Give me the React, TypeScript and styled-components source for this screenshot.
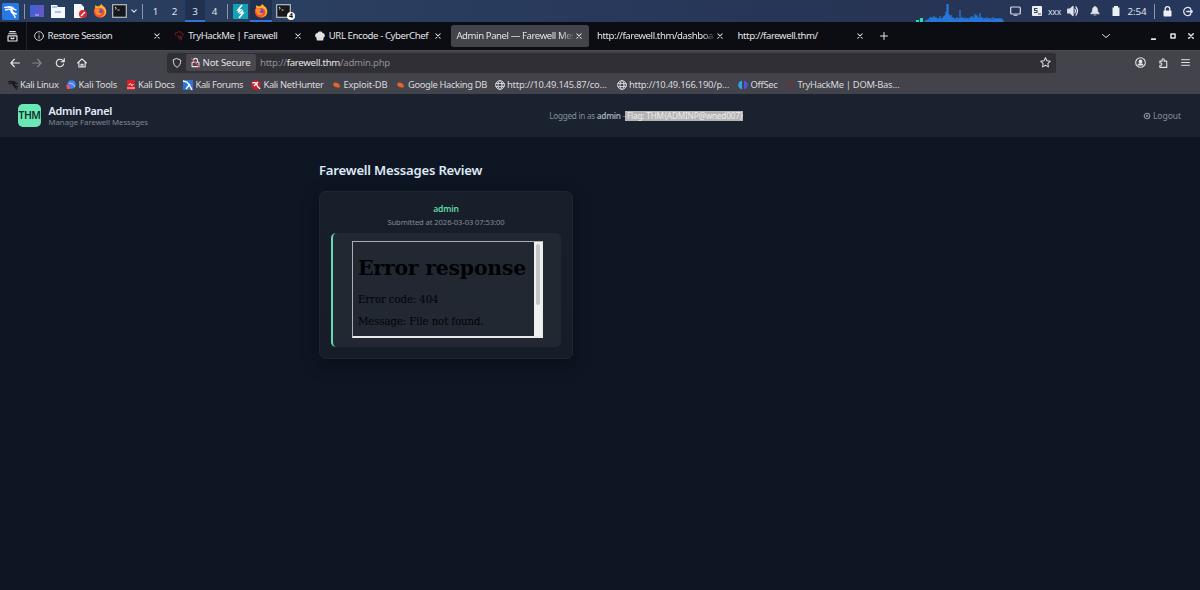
import React from 'react';
import styled, { createGlobalStyle } from 'styled-components';

const Global = createGlobalStyle`
  *{box-sizing:border-box}
  html,body{margin:0;background:#0e1623}
  body{font-family:"Noto Sans",sans-serif;width:1200px;height:590px;overflow:hidden}
  svg{display:block;flex:none;overflow:visible}
`;

const Screen = styled.div`display:flex;flex-direction:column;width:1200px;height:590px;background:#0e1623;`;
const TaskBar = styled.header`
  display:flex;height:22px;flex:none;color:#dfe3ec;
  background:linear-gradient(90deg,#273b5d 0,#2b3f60 25%,#28395b 50%,#273454 75%,#26375c 100%);
`;
const Slot = styled.div<{ $w: number; $on?: boolean; $small?: boolean }>`
  width:${p => p.$w}px;height:22px;flex:none;display:flex;align-items:center;justify-content:center;
  font-size:${p => (p.$small ? 8.5 : 9.8)}px;letter-spacing:-.15px;position:relative;
  background:${p => (p.$on ? '#20304f' : 'transparent')};
  box-shadow:${p => (p.$on ? 'inset 0 -2px #3672dc' : 'none')};
`;
const Rule = styled.i`width:1px;height:15px;background:#8b96aa;`;
const Fill = styled.div`flex:1;`;
const Count = styled.b`
  position:absolute;right:-1px;bottom:2px;width:8px;height:8px;border-radius:50%;background:#fff;color:#111;
  font-size:7px;line-height:8px;text-align:center;
`;
const TabStrip = styled.div`display:flex;height:28px;flex:none;background:#0c0d12;color:#e2e3e6;align-items:center;`;
const ViewCell = styled.div`width:27px;height:28px;border-right:1px solid #24252b;display:flex;align-items:center;justify-content:center;padding-right:2px;`;
const Tabs = styled.div`display:flex;gap:3px;padding-left:2.6px;`;
const TabBox = styled.div<{ $on?: boolean }>`
  width:137.6px;height:22px;border-radius:2.5px;display:flex;align-items:center;padding:0 7px 0 4px;gap:3px;
  background:${p => (p.$on ? '#42434b' : 'transparent')};
`;
const TabLabel = styled.span<{ $fade?: boolean }>`
  flex:1;min-width:0;white-space:nowrap;font-size:9.6px;line-height:14px;letter-spacing:-.42px;padding-left:1px;
  mask-image:${p => (p.$fade ? 'linear-gradient(90deg,#000 90%,transparent 102%)' : 'none')};
`;
const NavBar = styled.div`display:flex;height:24px;flex:none;background:#42434b;border-top:1px solid #4b4c53;align-items:center;`;
const UrlBar = styled.div`width:889px;height:20px;background:#2f2f35;border-radius:2.5px;display:flex;align-items:center;`;
const Chip = styled.div`
  width:70px;height:17px;background:#47474d;border-radius:2px;display:flex;align-items:center;gap:1.5px;padding-left:4px;color:#e2e2e5;
  font-size:9.6px;letter-spacing:-.15px;white-space:nowrap;
`;
const Url = styled.span`
  color:#8f8f98;font-size:9.6px;margin-left:4px;letter-spacing:-.26px;
  b{font-weight:400;color:#e8e8eb;}
`;
const Bookmarks = styled.div`display:flex;height:20px;flex:none;background:#42434b;padding:1px 0 0 7.5px;align-items:center;`;
const BookmarkBox = styled.div<{ $w: number; $ls?: number }>`
  width:${p => p.$w}px;flex:none;display:flex;align-items:center;gap:2.5px;color:#d9dadd;font-size:9.4px;
  line-height:14px;white-space:nowrap;letter-spacing:${p => p.$ls ?? -0.37}px;
`;
const PageHeader = styled.div`
  height:42.6px;flex:none;background:#1b222f;display:flex;align-items:center;justify-content:space-between;padding:0 19px 0 18px;
`;
const Brand = styled.div`display:flex;align-items:center;gap:7.5px;width:200px;`;
const Logo = styled.div`
  width:23px;height:23px;border-radius:5px;background:#69e8b5;color:#123127;font-weight:600;font-size:10.4px;display:flex;align-items:center;justify-content:center;letter-spacing:-.5px;
`;
const Title = styled.div`color:#e4edf8;font-size:10.8px;font-weight:600;line-height:13px;letter-spacing:-.25px;`;
const Sub = styled.div`color:#7d8594;font-size:7.8px;line-height:10px;letter-spacing:-.04px;`;
const Session = styled.div`
  color:#858d9b;font-size:8.2px;letter-spacing:-.27px;white-space:nowrap;line-height:11px;margin-left:93px;
  b{font-weight:600;color:#a2aab7}
`;
const Flag = styled.span`background:#b4b4b4;color:#ededed;padding-left:1.5px;display:inline-block;line-height:10px;letter-spacing:-.16px;margin-left:-1px;`;
const Logout = styled.div`color:#858d9b;font-size:8.6px;letter-spacing:-.1px;width:200px;padding-top:1px;display:flex;justify-content:flex-end;align-items:center;gap:2px;`;
const Main = styled.main`padding:24.2px 0 0 319px;flex:1;`;
const Heading = styled.h2`margin:0;color:#dfe8f5;font-size:13.1px;font-weight:600;line-height:18px;letter-spacing:-.2px;`;
const Card = styled.section`
  width:254px;height:168px;margin-top:12.2px;padding:11px 11px 11px;border:1px solid #1e2632;border-radius:7px;background:linear-gradient(180deg,#181f2a,#161d29);
  box-shadow:0 5px 18px rgba(3,7,14,.4);text-align:center;
`;
const Author = styled.div`color:#62d6a7;font-size:8.5px;font-weight:600;line-height:12px;letter-spacing:-.15px;`;
const Stamp = styled.div`color:#838b98;font-size:7.6px;line-height:10px;margin-top:2.5px;letter-spacing:-.08px;`;
const Message = styled.div`
  margin-top:6px;height:114px;border-left:2px solid #62dcae;border-radius:5px;background:#212832;padding:7.4px 0 0 19px;
`;
const Frame = styled.div`
  width:190.5px;height:97px;border:1px solid;border-width:1px 1px 2px 1px;border-color:#a9acb0 #eaeaea #eaeaea #a9acb0;display:flex;
`;
const Doc = styled.div`
  flex:1;color:#010203;text-align:left;padding:13px 0 0 5px;font-family:"DejaVu Serif",serif;white-space:nowrap;
  h1{font-size:20.4px;line-height:26px;margin:0 0 12px;letter-spacing:-.2px;}
  p{font-size:10.2px;line-height:13px;margin:0 0 9px;letter-spacing:-.1px;}
`;
const Scroll = styled.div`width:8px;background:#f0f0f0;padding:2px 2px;`;
const Thumb = styled.div`height:61px;background:#c6c6c6;border-radius:2px;`;

const Line = ({ s = 12, d, w = 1.6, c = 'currentColor', children }: { s?: number; d?: string; w?: number; c?: string; children?: React.ReactNode }) => (
  <svg width={s} height={s} viewBox="0 0 16 16" fill="none" stroke={c} strokeWidth={w} strokeLinecap="round" strokeLinejoin="round">
    {d && <path d={d} />}{children}
  </svg>
);
const Close = ({ s = 6 }: { s?: number }) => <Line s={s} w={2.8} d="M2 2l12 12M14 2L2 14" />;
const dragonPath = 'M1 3c4-1 7-1 9 2M2 6c3-1 6-1 8 1 0 3 3 3 5 4M6 2c4 0 5 1 6 3l2.500 1M8.500 7c0 3 4 3 5 8';
const Dragon = ({ s, c, w = 1.4 }: { s: number; c: string; w?: number }) => <Line s={s} c={c} w={w} d={dragonPath} />;
const Firefox = () => (
  <svg width="14" height="14" viewBox="0 0 16 16">
    <circle cx="8" cy="8.7" r="7" fill="#f4512d" />
    <path d="M2 4l1-3 2 2 3-.5C8 1 10 0 10 0c0 2 4 3 5 7 1 5-3 8-7 8 4-1 6-4 5-7C12 5 9 4 7 5z" fill="#ffb52d" />
    <circle cx="7.5" cy="8.7" r="3.4" fill="#7648c5" />
    <path d="M1.5 6c2-2 4-1 5 0l2 .6c0 1-2 1.4-2 1.4 0 2 2 3 4 2-1 3-5 4-7 1z" fill="#ff8a26" />
  </svg>
);
const Terminal = () => (
  <svg width="15" height="14" viewBox="0 0 15 14">
    <rect x=".7" y=".7" width="13.6" height="12.6" fill="#151719" stroke="#b9bec4" strokeWidth="1.2" />
    <path d="M3 3l1.4 1.2L3 5.5M5.5 6h2" stroke="#eee" fill="none" strokeWidth=".9" />
  </svg>
);
const Globe = () => <Line s={10} w={1.5}><circle cx="8" cy="8" r="7" /><ellipse cx="8" cy="8" rx="3.2" ry="7" /><path d="M1.5 5.5h13M1.5 10.5h13" /></Line>;
const Bug = () => (
  <svg width="9.500" height="9.500" viewBox="0 0 10 10"><path d="M1.400 4C2 2 5 2.300 6.500 3.700 8 5 9 6.500 8 7.500 6 8.500 3 7.500 1.400 5.500z" fill="#e8642a" /><path d="M1 2.500l1.500 1M5 1.800l-.3 1.400M8.800 4l-1.300.6M3 8l.6-1" stroke="#8a4a34" strokeWidth=".6" /></svg>
);
const Cloud = ({ s = 11, c = '#8c1f2a' }: { s?: number; c?: string }) => (
  <Line s={s} c={c} w={1.5}><path d="M3 7C0 6 2 2 5 3c2-3 7-2 7 1 3 0 4 3 2 4" /><path d="M6 8h2M10 8v2M7 11h3M12 10v3M9 14h1" /></Line>
);
const Graph = () => {
  const bars = [1,2,2,3,3,5,4,5,4,6,4,5,3,4,4,6,3,4,5,6,7,10,18,18,8,6,7,4,5,3,4,3,5,4,3,12,4,5,4,3,5,3,4,4,3,5,4,6,5,4,8,6,7,4,5,9,4,5,3,4,4,3,5,3,4,3,4,2,5,3,4,3,4,3,4,3,4,3,2];
  return (
    <svg width="88" height="20" viewBox="0 0 88 20">
      <path d="M0 19h3v2H0zM4 17h3v4H4z" fill="#22e0b0" />
      {bars.map((h, i) => <rect key={i} x={8.5 + i} y={21 - h} width="1.05" height={h} fill="#258aff" />)}
    </svg>
  );
};

const tabs: { t: string; icon?: React.ReactNode; on?: boolean; fade?: boolean }[] = [
  { t: 'Restore Session', icon: <Line s={10} w={1.4}><circle cx="8" cy="8" r="7" /><path d="M8 7.500v4M8 4.500v.3" /></Line> },
  { t: 'TryHackMe | Farewell', icon: <Cloud s={10} /> },
  { t: 'URL Encode - CyberChef', icon: <svg width="10" height="10" viewBox="0 0 16 16"><path d="M3 15l-1-5C-1 9 0 3 4 3c2-3 7-3 8 0 4 0 5 6 2 7l-1 5z" fill="#e2e2e2" /><path d="M6.500 10v3M9.500 10v3" stroke="#c4c4c4" /></svg> },
  { t: 'Admin Panel — Farewell Mes', on: true, fade: true },
  { t: 'http://farewell.thm/dashboar', fade: true },
  { t: 'http://farewell.thm/' },
];
const marks: { t: string; w: number; ls?: number; icon: React.ReactNode }[] = [
  { t: 'Kali Linux', w: 58.5, icon: <Dragon s={10} c="#15171b" w={2} /> },
  { t: 'Kali Tools', w: 59.5, ls: -0.27, icon: <svg width="10" height="10" viewBox="0 0 10 10"><circle cx="5.500" cy="4.500" r="4.300" fill="#3d83f5" /><path d="M0 5h4v4H1z" fill="#e65568" /><path d="M3 3l4 1 2 3" stroke="#cfe0ff" fill="none" strokeWidth=".8" /></svg> },
  { t: 'Kali Docs', w: 57.5, icon: <svg width="10" height="10" viewBox="0 0 10 10"><path d="M1 0h8v10H1z" fill="#d52027" /><path d="M2.500 5l2-1.500 1 2 2-1M1 8h8" stroke="#fff" fill="none" strokeWidth=".9" /></svg> },
  { t: 'Kali Forums', w: 68, icon: <svg width="10" height="10" viewBox="0 0 10 10"><path d="M0 0h10v10H0z" fill="#2b74d9" /><path d="M0 1l4 1 3 4 2 4M3 9l4-5" stroke="#fff" fill="none" strokeWidth="1.400" /></svg> },
  { t: 'Kali NetHunter', w: 80.5, icon: <svg width="10" height="10" viewBox="0 0 10 10"><circle cx="5" cy="5" r="4.800" fill="#c8202e" /><path d="M1 3c3-1 5 0 5 2s2 2 3 4M3 6l4-4" stroke="#fff" fill="none" strokeWidth="1.300" /></svg> },
  { t: 'Exploit-DB', w: 64.5, ls: -0.2, icon: <Bug /> },
  { t: 'Google Hacking DB', w: 98.5, icon: <Bug /> },
  { t: 'http://10.49.145.87/co…', w: 122, ls: -0.22, icon: <Globe /> },
  { t: 'http://10.49.166.190/p…', w: 121.5, ls: -0.24, icon: <Globe /> },
  { t: 'OffSec', w: 47, ls: -0.28, icon: <svg width="10" height="10" viewBox="0 0 10 10"><path d="M4 .5C-1 2-1 8 4 9.500z" fill="#2aa5e8" /><path d="M6 .5c5 1.500 5 7.500 0 9z" fill="#5454d8" /></svg> },
  { t: 'TryHackMe | DOM-Bas…', w: 115, ls: -0.3, icon: <Cloud s={10} c="#7c2c38" /> },
];

export default function App() {
  return (
    <Screen>
      <Global />
      <TaskBar>
        <Slot $w={21}><svg width="17" height="17" viewBox="0 0 17 17"><rect width="17" height="17" rx="1.500" fill="#2879e8" /><g transform="translate(2 2) scale(.82)"><path d={dragonPath} fill="none" stroke="#fff" strokeWidth="1.800" strokeLinecap="round" /></g></svg></Slot>
        <Slot $w={6}><Rule /></Slot>
        <Slot $w={20}><svg width="14" height="12" viewBox="0 0 14 12"><defs><linearGradient id="desk"><stop stopColor="#3a62d8" /><stop offset="1" stopColor="#6c55c4" /></linearGradient></defs><rect width="14" height="12" fill="url(#desk)" /><path d="M5 10h4" stroke="#c5cbff" /></svg></Slot>
        <Slot $w={22}><svg width="14" height="13" viewBox="0 0 14 13"><path d="M0 0h6l1 2h7v11H0z" fill="#f5f7fb" /><path d="M1 2h5M4 7h6" stroke="#5298ed" strokeWidth="1.200" /></svg></Slot>
        <Slot $w={22}><svg width="14" height="14" viewBox="0 0 14 14"><path d="M1 0h7l3 3v11H1z" fill="#f7f7f7" /><circle cx="10" cy="10" r="4" fill="#db2734" /><path d="M8 12l4-4" stroke="#fff" strokeWidth="1.300" /></svg></Slot>
        <Slot $w={18}><Firefox /></Slot>
        <Slot $w={21}><Terminal /></Slot>
        <Slot $w={8}><Line s={6} w={3} d="M2 5l6 6 6-6" /></Slot>
        <Slot $w={9}><Rule /></Slot>
        <Slot $w={17}>1</Slot><Slot $w={21}>2</Slot><Slot $w={20} $on>3</Slot><Slot $w={19}>4</Slot>
        <Slot $w={7}><Rule /></Slot>
        <Slot $w={19}><svg width="15" height="15" viewBox="0 0 15 15"><rect width="15" height="15" fill="#13a3b5" /><path d="M9 1L5 6h2.500L5 8.500M6 14l4-5H7.500L10 6.500" stroke="#fff" fill="none" strokeWidth="1.600" /></svg></Slot>
        <Slot $w={22} $on><Firefox /></Slot>
        <Slot $w={22}><Terminal /><Count>4</Count></Slot>
        <Fill />
        <Slot $w={88}><Graph /></Slot>
        <Slot $w={22}><svg width="11" height="10" viewBox="0 0 11 10"><rect x=".7" y="1" width="9.600" height="7" rx="1" fill="none" stroke="#d9dde6" strokeWidth="1.200" /><path d="M3.500 9.300h4" stroke="#d9dde6" /></svg></Slot>
        <Slot $w={22}><svg width="10" height="10" viewBox="0 0 10 10"><rect width="10" height="10" rx="1" fill="#eceff4" /><path d="M5.500 2.500H2.500v2h2.500v2H2M6 8h3" fill="none" stroke="#33415e" strokeWidth="1.100" /></svg></Slot>
        <Slot $w={13} $small>xxx</Slot>
        <Slot $w={23}><Line s={12} w={1.7}><path d="M1 5.500h3L8 2v12l-4-3.500H1z" fill="currentColor" /><path d="M10.500 5.500q2 2.500 0 5M12 2.500q4 5.500 0 11" /></Line></Slot>
        <Slot $w={22}><Line s={10} w={1}><path d="M8 1C4 1 4 5 3.500 9L1 12.500h14L12.500 9C12 5 12 1 8 1zM6.500 14.500h3" fill="currentColor" /></Line></Slot>
        <Slot $w={20}><svg width="8" height="10" viewBox="0 0 8 10"><path d="M2 0h4v1.500h1.500V10H.5V1.500H2z" fill="#eceff4" /></svg></Slot>
        <Slot $w={22}>2:54</Slot>
        <Slot $w={12}><Rule /></Slot>
        <Slot $w={14}><svg width="9" height="11" viewBox="0 0 9 11"><rect x=".5" y="4.500" width="8" height="6" rx=".8" fill="#eceff4" /><path d="M2.200 5V3a2.300 2.300 0 014.600 0v2" fill="none" stroke="#eceff4" strokeWidth="1.300" /></svg></Slot>
        <Slot $w={26}><Line s={11} w={2}><path d="M12.500 3.500a6 6 0 100 9M7 8h8M12.500 5.500L15 8l-2.500 2.500" /></Line></Slot>
      </TaskBar>
      <TabStrip>
        <ViewCell><Line s={11} w={1.7}><path d="M4 1h8M2.500 4h11M1.500 7h13v7.500h-13zM6 9.500v1.500h4V9.500" /></Line></ViewCell>
        <Tabs>
          {tabs.map(x => <TabBox key={x.t} $on={x.on}>{x.icon}<TabLabel $fade={x.fade}>{x.t}</TabLabel><Close /></TabBox>)}
        </Tabs>
        <Slot $w={27}><Line s={8} w={2} d="M8 1v14M1 8h14" /></Slot>
        <Fill />
        <Slot $w={28}><Line s={8} w={2} d="M1 5l7 6 7-6" /></Slot>
        <Slot $w={24} />
        <Slot $w={19}><Line s={7} w={4} d="M4 14h8" /></Slot>
        <Slot $w={19}><Line s={6} w={4} d="M2.500 2.500h11v11h-11z" /></Slot>
        <Slot $w={18}><Line s={6} w={4} d="M2 2l12 12M14 2L2 14" /></Slot>
      </TabStrip>
      <NavBar>
        <Slot $w={4} />
        <Slot $w={22}><Line s={10} w={1.8} c="#eee" d="M15 8H1.500M7 2L1.500 8 7 14" /></Slot>
        <Slot $w={22}><Line s={10} w={1.8} c="#85868c" d="M1 8h13.500M9 2l5.500 6L9 14" /></Slot>
        <Slot $w={23}><Line s={10} w={1.8} d="M13.800 9.500A6 6 0 1112 3.500l2.500 2.300M14.800 1v5h-5" c="#eee" /></Slot>
        <Slot $w={22}><Line s={10} w={1.7} c="#eee" d="M1 8l7-6.500L15 8M3 7v7.500h10V7M6.500 14.500V10h3v4.500" /></Slot>
        <Slot $w={74} />
        <UrlBar>
          <Slot $w={19}><Line s={10} w={1.6} c="#dedee2" d="M8 1l6 2.300C14 9 12 13 8 15 4 13 2 9 2 3.300z" /></Slot>
          <Chip><Line s={11} w={1.5}><path d="M3 7.500h10v6.500H3zM5 7V5a3 3 0 016 0v2" /><path d="M2 2l12 13" stroke="#e0405c" /></Line>Not Secure</Chip>
          <Url>http://<b>farewell.thm</b>/admin.php</Url>
          <Fill />
          <Slot $w={21}><Line s={11} w={1.5} c="#dedee2" d="M8 1l2.100 4.500 4.900.6-3.600 3.400.9 4.900L8 12l-4.300 2.400.9-4.900L1 6.100l4.900-.6z" /></Slot>
        </UrlBar>
        <Fill />
        <Slot $w={23}><Line s={11} w={1.6} c="#e6e6e9"><circle cx="8" cy="8" r="7" /><circle cx="8" cy="6.500" r="2" fill="#e6e6e9" /><path d="M4.500 11.500c1-2 6-2 7 0z" fill="#e6e6e9" /></Line></Slot>
        <Slot $w={22}><Line s={10} w={1.7} c="#e6e6e9" d="M3 5h3.500V3a1.700 1.700 0 013.400 0v2H14v10H3v-3.500h1.500a1.700 1.700 0 000-3.400H3z" /></Slot>
        <Slot $w={23}><Line s={9} w={1.7} c="#e6e6e9" d="M1 3h14M1 8h14M1 13h14" /></Slot>
        <Slot $w={3.5} />
      </NavBar>
      <Bookmarks>
        {marks.map(m => <BookmarkBox key={m.t} $w={m.w} $ls={m.ls}>{m.icon}<span>{m.t}</span></BookmarkBox>)}
      </Bookmarks>
      <PageHeader>
        <Brand><Logo>THM</Logo><div><Title>Admin Panel</Title><Sub>Manage Farewell Messages</Sub></div></Brand>
        <Session>Logged in as <b>admin</b> –<Flag>Flag: THM{'{'}ADMINP@wned007{'}'}</Flag></Session>
        <Logout><Line s={8} w={2.2}><circle cx="8" cy="8" r="5.500" /><circle cx="8" cy="8" r="1" /><path d="M8 3v3M4 11l2.500-2M12 11L9.500 9" strokeWidth="1.200" /></Line>Logout</Logout>
      </PageHeader>
      <Main>
        <Heading>Farewell Messages Review</Heading>
        <Card>
          <Author>admin</Author>
          <Stamp>Submitted at 2026-03-03 07:53:00</Stamp>
          <Message>
            <Frame>
              <Doc><h1>Error response</h1><p>Error code: 404</p><p>Message: File not found.</p></Doc>
              <Scroll><Thumb /></Scroll>
            </Frame>
          </Message>
        </Card>
      </Main>
    </Screen>
  );
}
